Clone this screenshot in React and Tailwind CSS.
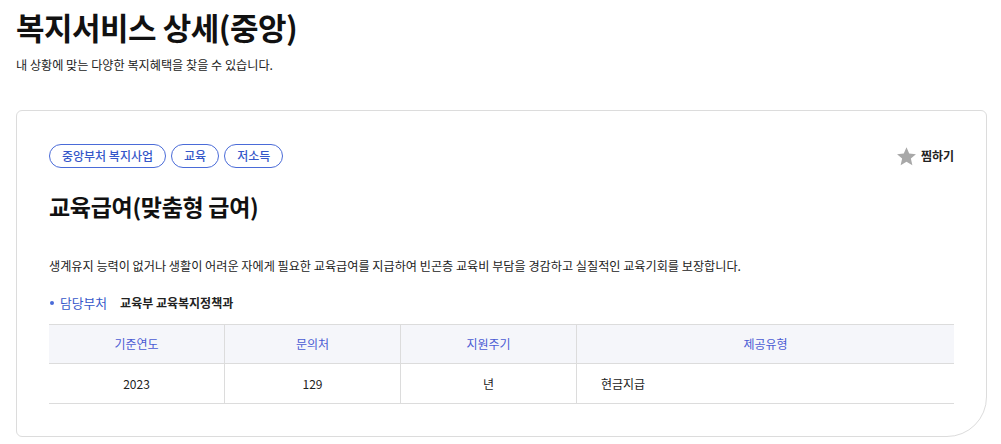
import React from 'react';

const tags = ['중앙부처 복지사업', '교육', '저소득'];

const columns = [
  { label: '기준연도', value: '2023', w: 'w-[175px]', center: true },
  { label: '문의처', value: '129', w: 'w-[176px]', center: true },
  { label: '지원주기', value: '년', w: 'w-[176px]', center: true },
  { label: '제공유형', value: '현금지급', w: 'flex-1', center: false },
];

function Star() {
  return (
    <svg width="21" height="21" viewBox="0 0 24 24" className="block">
      <path
        d="M12 1.5l3.1 7.1 7.7.7-5.8 5.1 1.7 7.6L12 18l-6.7 4 1.7-7.6-5.8-5.1 7.7-.7z"
        fill="#a8a8a8"
      />
    </svg>
  );
}

export default function App() {
  return (
    <div className="w-[1001px] bg-white px-4 text-[#111]" style={{ fontFamily: '"Noto Sans CJK KR", "Noto Sans", sans-serif' }}>
      {/* page header */}
      <h1 className="pt-[4px] text-[31px] font-bold leading-[46px] tracking-[-0.5px]">복지서비스 상세(중앙)</h1>
      <p className="mt-[6px] text-[12.15px] leading-[18px] text-[#222]">내 상황에 맞는 다양한 복지혜택을 찾을 수 있습니다.</p>

      {/* detail card */}
      <div className="mt-[36px] w-[971px] rounded-[6px] rounded-br-[40px] border border-[#dcdcdc] px-8 pt-[33px] pb-[32px]">
        <div className="flex items-center justify-between">
          <div className="flex gap-[5px]">
            {tags.map((t) => (
              <span
                key={t}
                className="flex h-[24px] items-center rounded-full border border-[#4a6bd8] px-[12px] text-[12px] font-medium text-[#3557c9]"
              >
                {t}
              </span>
            ))}
          </div>
          <button className="flex items-center gap-[4px] text-[12px] font-bold text-[#222]">
            <Star />
            찜하기
          </button>
        </div>

        <h2 className="mt-[21px] text-[23px] font-bold leading-[34px] tracking-[-0.3px]">교육급여(맞춤형 급여)</h2>

        <p className="mt-[33px] text-[12.15px] leading-[20px] text-[#222]">
          생계유지 능력이 없거나 생활이 어려운 자에게 필요한 교육급여를 지급하여 빈곤층 교육비 부담을 경감하고 실질적인 교육기회를 보장합니다.
        </p>

        <div className="mt-[17px] flex items-center text-[12.8px] leading-[20px]">
          <span className="ml-[1px] mr-[6px] h-[4px] w-[4px] rounded-full bg-[#4a6bd8]" />
          <span className="text-[#3557c9]">담당부처</span>
          <span className="ml-[13px] text-[12px] font-bold text-[#222]">교육부 교육복지정책과</span>
        </div>

        <div className="mt-[11px] border-t border-b border-[#dcdcdc]">
          <div className="flex h-[39px] border-b border-[#dcdcdc] bg-[#f5f6fa]">
            {columns.map((c, i) => (
              <div
                key={c.label}
                className={`${c.w} flex items-center justify-center text-[12px] text-[#4a5bd4] ${i > 0 ? 'border-l border-[#dcdcdc]' : ''}`}
              >
                {c.label}
              </div>
            ))}
          </div>
          <div className="flex h-[39px]">
            {columns.map((c, i) => (
              <div
                key={c.label}
                className={`${c.w} flex items-center text-[12px] text-[#222] ${c.center ? 'justify-center' : 'pl-6'} ${i > 0 ? 'border-l border-[#dcdcdc]' : ''}`}
              >
                {c.value}
              </div>
            ))}
          </div>
        </div>
      </div>
      <div className="h-[8px]" />
    </div>
  );
}
